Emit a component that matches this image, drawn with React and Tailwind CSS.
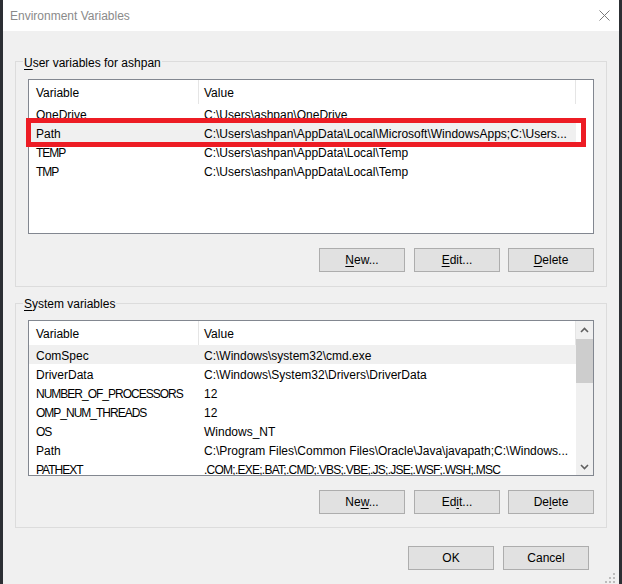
import React from "react";

const userRows = [
  { n: "OneDrive", v: "C:\\Users\\ashpan\\OneDrive" },
  { n: "Path", v: "C:\\Users\\ashpan\\AppData\\Local\\Microsoft\\WindowsApps;C:\\Users...", hl: true },
  { n: "TEMP", v: "C:\\Users\\ashpan\\AppData\\Local\\Temp", nc: "tracking-[-1px]" },
  { n: "TMP", v: "C:\\Users\\ashpan\\AppData\\Local\\Temp", nc: "tracking-[-1px]" },
];

const sysRows = [
  { n: "ComSpec", v: "C:\\Windows\\system32\\cmd.exe", hl: true },
  { n: "DriverData", v: "C:\\Windows\\System32\\Drivers\\DriverData" },
  { n: "NUMBER_OF_PROCESSORS", v: "12", nc: "tracking-[-1px]" },
  { n: "OMP_NUM_THREADS", v: "12", nc: "tracking-[-1px]" },
  { n: "OS", v: "Windows_NT", nc: "tracking-[-1px]" },
  { n: "Path", v: "C:\\Program Files\\Common Files\\Oracle\\Java\\javapath;C:\\Windows..." },
  {
    n: "PATHEXT",
    v: ".COM;.EXE;.BAT;.CMD;.VBS;.VBE;.JS;.JSE;.WSF;.WSH;.MSC",
    nc: "tracking-[-1px]",
    vc: "tracking-[-0.75px]",
  },
];

function Header() {
  return (
    <div className="flex h-[24px] shrink-0">
      <div className="w-[170px] pl-[7px] pt-[3px] flex items-center border-r border-[#e5e5e5]">Variable</div>
      <div className="w-[377px] pl-[5px] pt-[3px] flex items-center border-r border-[#e5e5e5]">Value</div>
    </div>
  );
}

function Rows({ rows }) {
  return rows.map((r, i) => (
    <div key={i} className={"flex h-[19px] shrink-0 w-[547px] " + (r.hl ? "bg-[#f0f0f0]" : "")}>
      <div className={"w-[170px] pl-[7px] pt-[3px] flex items-center whitespace-nowrap overflow-hidden " + (r.nc || "")}>
        {r.n}
      </div>
      <div className={"w-[377px] pl-[5px] pt-[3px] flex items-center whitespace-nowrap overflow-hidden " + (r.vc || "")}>
        {r.v}
      </div>
    </div>
  ));
}

function Btn({ children, className = "" }) {
  return (
    <div
      className={
        "w-[86px] h-[24px] pt-[1px] bg-[#e1e1e1] border border-[#adadad] flex items-center justify-center " + className
      }
    >
      <span>{children}</span>
    </div>
  );
}

function U({ children }) {
  return <span className="underline underline-offset-[2px]">{children}</span>;
}

function Chevron({ up }) {
  return (
    <svg width="9" height="6" viewBox="0 0 9 6">
      <path
        d={up ? "M1 5 L4.5 1.5 L8 5" : "M1 1 L4.5 4.5 L8 1"}
        fill="none"
        stroke="#606060"
        strokeWidth="1.6"
      />
    </svg>
  );
}

export default function App() {
  return (
    <div className="relative w-[622px] h-[584px] flex bg-[#2c2f34] text-[12px] leading-[15px] text-black font-['Liberation_Sans','Arial',sans-serif] overflow-hidden">
      <div className="w-[3px] shrink-0 bg-[#2c2f34]" />
      <div className="relative w-[616px] flex flex-col">
        {/* Title bar */}
        <div className="h-[31px] shrink-0 bg-white flex items-center justify-between">
          <span className="pl-[7px] pt-[2px] text-[#8a8a8a]">Environment Variables</span>
          <svg width="11" height="11" viewBox="0 0 11 11" className="mr-[9px]">
            <path d="M0.5 0.5 L10.5 10.5 M10.5 0.5 L0.5 10.5" stroke="#7a7a7a" strokeWidth="1" />
          </svg>
        </div>

        {/* Body */}
        <div className="flex-1 bg-[#f0f0f0] px-[12px] pt-[30px] flex flex-col">
          {/* User variables */}
          <div className="relative border border-[#dcdcdc] pt-[17px] px-[12px] pb-[14px] flex flex-col">
            <span className="absolute -top-[6px] left-[7px] px-[1px] bg-[#f0f0f0]">
              <U>U</U>ser variables for ashpan
            </span>
            <div className="h-[155px] border border-[#828790] bg-white flex flex-col overflow-hidden">
              <Header />
              <Rows rows={userRows} />
            </div>
            <div className="mt-[14px] flex justify-end">
              <Btn className="mr-[9px]">
                <U>N</U>ew...
              </Btn>
              <Btn className="mr-[8px]">
                <U>E</U>dit...
              </Btn>
              <Btn>
                <U>D</U>elete
              </Btn>
            </div>
          </div>

          {/* System variables */}
          <div className="relative mt-[16px] border border-[#dcdcdc] pt-[16px] px-[12px] pb-[13px] flex flex-col">
            <span className="absolute -top-[7px] left-[7px] px-[1px] bg-[#f0f0f0]">
              <U>S</U>ystem variables
            </span>
            <div className="h-[156px] border border-[#828790] bg-white flex overflow-hidden">
              <div className="flex-1 flex flex-col overflow-hidden">
                <Header />
                <Rows rows={sysRows} />
              </div>
              <div className="w-[17px] shrink-0 bg-[#f0f0f0] flex flex-col">
                <div className="h-[17px] flex items-center justify-center">
                  <Chevron up />
                </div>
                <div className="h-[44px] bg-[#cdcdcd] mt-[1px]" />
                <div className="flex-1" />
                <div className="h-[17px] flex items-center justify-center">
                  <Chevron />
                </div>
              </div>
            </div>
            <div className="mt-[14px] flex justify-end">
              <Btn className="mr-[9px]">
                Ne<U>w</U>...
              </Btn>
              <Btn className="mr-[8px]">
                Ed<U>i</U>t...
              </Btn>
              <Btn>
                De<U>l</U>ete
              </Btn>
            </div>
          </div>

          {/* OK / Cancel */}
          <div className="mt-[18px] mr-[18px] flex justify-end">
            <Btn className="mr-[9px]">OK</Btn>
            <Btn>Cancel</Btn>
          </div>
        </div>

        {/* resize grip */}
        <svg width="10" height="10" viewBox="0 0 10 10" className="absolute right-[4px] bottom-[1px]">
          <rect x="8" y="0" width="2" height="2" fill="#bcbcbc" />
          <rect x="4" y="4" width="2" height="2" fill="#bcbcbc" />
          <rect x="8" y="4" width="2" height="2" fill="#bcbcbc" />
          <rect x="0" y="8" width="2" height="2" fill="#bcbcbc" />
          <rect x="4" y="8" width="2" height="2" fill="#bcbcbc" />
          <rect x="8" y="8" width="2" height="2" fill="#bcbcbc" />
        </svg>
      </div>
      <div className="w-[3px] shrink-0 bg-[#2c2f34]" />

      {/* red annotation box */}
      <div className="absolute left-[26px] top-[118px] w-[560px] h-[29px] border-[5px] border-[#ed1c24]" />
    </div>
  );
}
